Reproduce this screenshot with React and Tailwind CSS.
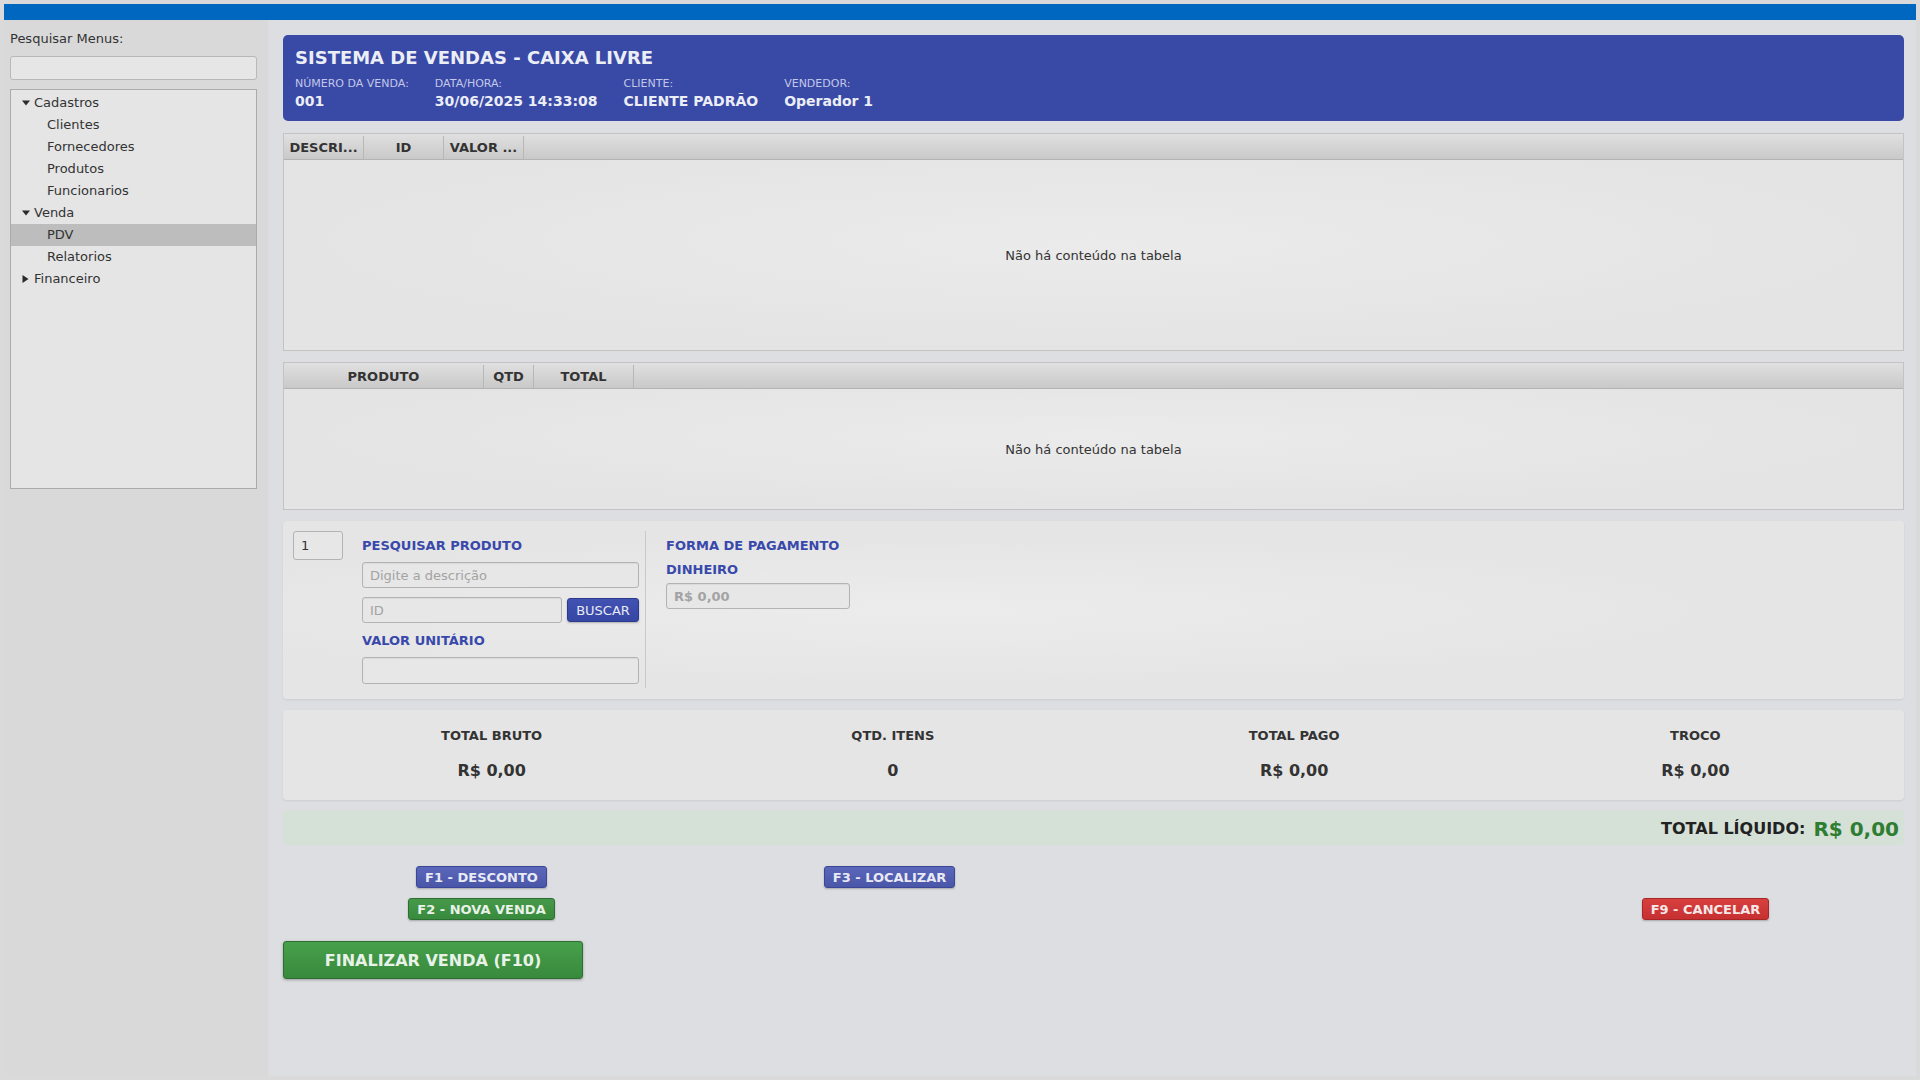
import React from 'react';

const menu = [
  { label: 'Cadastros', arrow: 'open' },
  { label: 'Clientes', child: true },
  { label: 'Fornecedores', child: true },
  { label: 'Produtos', child: true },
  { label: 'Funcionarios', child: true },
  { label: 'Venda', arrow: 'open' },
  { label: 'PDV', child: true, selected: true },
  { label: 'Relatorios', child: true },
  { label: 'Financeiro', arrow: 'closed' },
];

function Arrow({ open }) {
  // tree expand / collapse markers
  if (open) {
    return (
      <svg width="8" height="6" viewBox="0 0 8 6" className="shrink-0">
        <path d="M0 0.5h8L4 5.5z" fill="#2b2b2b" />
      </svg>
    );
  }
  return (
    <svg width="7" height="8" viewBox="0 0 7 8" className="shrink-0">
      <path d="M0.5 0v8L6.5 4z" fill="#2b2b2b" />
    </svg>
  );
}

function TreeRow({ item }) {
  return (
    <div
      className={
        item.selected
          ? 'flex h-[22px] items-center bg-[#bdbdbd] pl-[36px] text-[13px] text-[#333]'
          : item.child
            ? 'flex h-[22px] items-center pl-[36px] text-[13px] text-[#333]'
            : 'flex h-[22px] items-center gap-[5px] pl-[11px] text-[13px] text-[#333]'
      }
    >
      {!item.child && (
        <span className="flex w-[7px] justify-center">
          <Arrow open={item.arrow === 'open'} />
        </span>
      )}
      <span>{item.label}</span>
    </div>
  );
}

function DataTable({ cols, h }) {
  return (
    <div className={`${h} flex flex-col border border-[#c3c3c3] bg-[radial-gradient(ellipse_at_center,#ebebeb_0%,#e4e4e4_70%)]`}>
      <div className="flex h-[26px] shrink-0 border-b border-[#b3b3b3] bg-gradient-to-b from-[#e0e0e0] to-[#c9c9c9] pt-[2px]">
        {cols.map((c) => (
          <div
            key={c.label}
            className={`${c.w} flex items-center justify-center border-r border-[#b7b7b7] text-[13px] font-bold text-[#333]`}
          >
            {c.label}
          </div>
        ))}
      </div>
      <div className="flex flex-1 items-center justify-center pt-[2px] text-[13px] text-[#333]">
        Não há conteúdo na tabela
      </div>
    </div>
  );
}

function Field({ className, placeholder, bold }) {
  return (
    <div
      className={`${className} flex items-center rounded-[3px] border border-[#b3b3b3] bg-[#e7e7e7] px-[7px] pt-[1px] shadow-[inset_0_1px_1px_rgba(0,0,0,0.06)] ${bold ? 'font-bold' : ''} text-[13px] text-[#a3a3a3]`}
    >
      {placeholder}
    </div>
  );
}

function Info({ label, value }) {
  return (
    <div className="flex flex-col">
      <span className="text-[11px] leading-[13px] text-[#c3c8e8]">{label}</span>
      <span className="mt-[3px] text-[14px] font-bold leading-[17px] text-[#eceef6]">{value}</span>
    </div>
  );
}

function Stat({ label, value }) {
  return (
    <div className="flex flex-col items-center">
      <span className="text-[13px] font-bold leading-[15px] text-[#333]">{label}</span>
      <span className="mt-[18px] text-[16px] font-bold leading-[19px] text-[#333]">{value}</span>
    </div>
  );
}

const btnBlue =
  'flex h-[22px] items-center rounded-[3px] border border-[#3b4696] bg-gradient-to-b from-[#5a67ba] to-[#4a56a8] px-[8px] pt-[1px] text-[13px] font-bold text-[#e9eaf4] shadow-[0_1px_2px_rgba(0,0,0,0.25)]';
const btnGreen =
  'flex h-[22px] items-center rounded-[3px] border border-[#2d6e31] bg-gradient-to-b from-[#46994a] to-[#388a3c] px-[8px] pt-[1px] text-[13px] font-bold text-[#e9f2e9] shadow-[0_1px_2px_rgba(0,0,0,0.25)]';
const btnRed =
  'flex h-[22px] items-center rounded-[3px] border border-[#a82626] bg-gradient-to-b from-[#d84040] to-[#c63030] px-[8px] pt-[1px] text-[13px] font-bold text-[#f4e8e8] shadow-[0_1px_2px_rgba(0,0,0,0.25)]';

export default function App() {
  return (
    <div className="flex h-[1080px] w-[1920px] flex-col overflow-hidden bg-[#dadada] p-[4px] font-['DejaVu_Sans','Liberation_Sans',sans-serif] text-[#333]">
      <div className="h-[16px] shrink-0 bg-[#0067c0]" />
      <div className="flex min-h-0 flex-1">
        {/* side menu */}
        <aside className="flex w-[264px] shrink-0 flex-col bg-[#d9d9d9] px-[6px] pt-[11px]">
          <div className="text-[13px] leading-[15px] text-[#333]">Pesquisar Menus:</div>
          <div className="mt-[10px] h-[24px] w-[247px] rounded-[3px] border border-[#b8b8b8] bg-[#e6e6e6]" />
          <div className="mt-[9px] h-[400px] w-[247px] border border-[#ababab] bg-[#e5e5e5] pt-[2px]">
            {menu.map((m) => (
              <TreeRow key={m.label} item={m} />
            ))}
          </div>
        </aside>

        <main className="flex min-w-0 flex-1 flex-col bg-[#dddee1] pl-[15px] pr-[12px] pt-[15px]">
          {/* header */}
          <div className="h-[86px] shrink-0 rounded-[5px] bg-[#3949a6] pl-[12px] pt-[12px]">
            <div className="text-[18px] font-bold leading-[22px] text-[#eceef6]">
              SISTEMA DE VENDAS - CAIXA LIVRE
            </div>
            <div className="mt-[8px] flex gap-[26px]">
              <Info label="NÚMERO DA VENDA:" value="001" />
              <Info label="DATA/HORA:" value="30/06/2025 14:33:08" />
              <Info label="CLIENTE:" value="CLIENTE PADRÃO" />
              <Info label="VENDEDOR:" value="Operador 1" />
            </div>
          </div>

          <div className="mt-[12px] shrink-0">
            <DataTable
              h="h-[218px]"
              cols={[
                { label: 'DESCRI...', w: 'w-[80px]' },
                { label: 'ID', w: 'w-[80px]' },
                { label: 'VALOR ...', w: 'w-[80px]' },
              ]}
            />
          </div>

          <div className="mt-[11px] shrink-0">
            <DataTable
              h="h-[148px]"
              cols={[
                { label: 'PRODUTO', w: 'w-[200px]' },
                { label: 'QTD', w: 'w-[50px]' },
                { label: 'TOTAL', w: 'w-[100px]' },
              ]}
            />
          </div>

          {/* product search / payment */}
          <div className="mt-[11px] flex h-[178px] shrink-0 rounded-[4px] bg-[radial-gradient(ellipse_at_40%_50%,#ececec_0%,#e5e5e5_60%)] pl-[10px] pt-[10px] shadow-[0_1px_2px_rgba(0,0,0,0.08)]">
            <div className="flex h-[29px] w-[50px] items-center rounded-[3px] border border-[#b3b3b3] bg-[#e7e7e7] px-[7px] pt-[1px] text-[13px] text-[#333]">
              1
            </div>
            <div className="ml-[19px] flex w-[277px] flex-col">
              <div className="mt-[7px] text-[13px] font-bold leading-[15px] text-[#3949ab]">PESQUISAR PRODUTO</div>
              <Field className="mt-[9px] h-[26px] w-[277px]" placeholder="Digite a descrição" />
              <div className="mt-[9px] flex h-[26px] items-center">
                <Field className="h-[26px] w-[200px]" placeholder="ID" />
                <button
                  type="button"
                  className="ml-[5px] flex h-[24px] w-[72px] items-center justify-center rounded-[3px] border border-[#2c3a8c] bg-gradient-to-b from-[#4252b2] to-[#3646a4] pt-[1px] text-[13px] text-[#e8eaf6] shadow-[0_1px_2px_rgba(0,0,0,0.25)]"
                >
                  BUSCAR
                </button>
              </div>
              <div className="mt-[10px] text-[13px] font-bold leading-[15px] text-[#3949ab]">VALOR UNITÁRIO</div>
              <Field className="mt-[9px] h-[27px] w-[277px]" placeholder="" />
            </div>
            <div className="ml-[6px] h-[157px] border-l border-[#c9c9c9]" />
            <div className="flex flex-col pl-[20px]">
              <div className="mt-[7px] text-[13px] font-bold leading-[15px] text-[#3949ab]">FORMA DE PAGAMENTO</div>
              <div className="mt-[9px] text-[13px] font-bold leading-[15px] text-[#3949ab]">DINHEIRO</div>
              <Field className="mt-[6px] h-[26px] w-[184px]" placeholder="R$ 0,00" bold />
            </div>
          </div>

          {/* totals */}
          <div className="mt-[11px] grid h-[90px] shrink-0 grid-cols-4 rounded-[4px] bg-[#e5e5e5] px-[8px] pt-[18px] shadow-[0_1px_2px_rgba(0,0,0,0.08)]">
            <Stat label="TOTAL BRUTO" value="R$ 0,00" />
            <Stat label="QTD. ITENS" value="0" />
            <Stat label="TOTAL PAGO" value="R$ 0,00" />
            <Stat label="TROCO" value="R$ 0,00" />
          </div>

          <div className="mt-[10px] flex h-[35px] shrink-0 items-center justify-end rounded-[4px] bg-[#d5e0d6] pr-[5px] pt-[3px]">
            <span className="text-[16px] font-bold text-[#222]">TOTAL LÍQUIDO:</span>
            <span className="ml-[8px] text-[20px] font-bold text-[#2e7d32]">R$ 0,00</span>
          </div>

          {/* shortcut buttons */}
          <div className="mt-[21px] grid shrink-0 grid-cols-4 grid-rows-[22px_22px] gap-x-[11px] gap-y-[10px]">
            <div className="col-start-1 row-start-1 flex justify-center">
              <button type="button" className={btnBlue}>F1 - DESCONTO</button>
            </div>
            <div className="col-start-2 row-start-1 flex justify-center">
              <button type="button" className={btnBlue}>F3 - LOCALIZAR</button>
            </div>
            <div className="col-start-1 row-start-2 flex justify-center">
              <button type="button" className={btnGreen}>F2 - NOVA VENDA</button>
            </div>
            <div className="col-start-4 row-start-2 flex justify-center">
              <button type="button" className={btnRed}>F9 - CANCELAR</button>
            </div>
          </div>

          <button
            type="button"
            className="mt-[21px] flex h-[38px] w-[300px] shrink-0 items-center justify-center rounded-[3px] border border-[#2d6f30] bg-gradient-to-b from-[#47a04b] to-[#38893c] pt-[1px] text-[16px] font-bold text-[#e8f2e8] shadow-[0_1px_3px_rgba(0,0,0,0.3)]"
          >
            FINALIZAR VENDA (F10)
          </button>
        </main>
      </div>
    </div>
  );
}
